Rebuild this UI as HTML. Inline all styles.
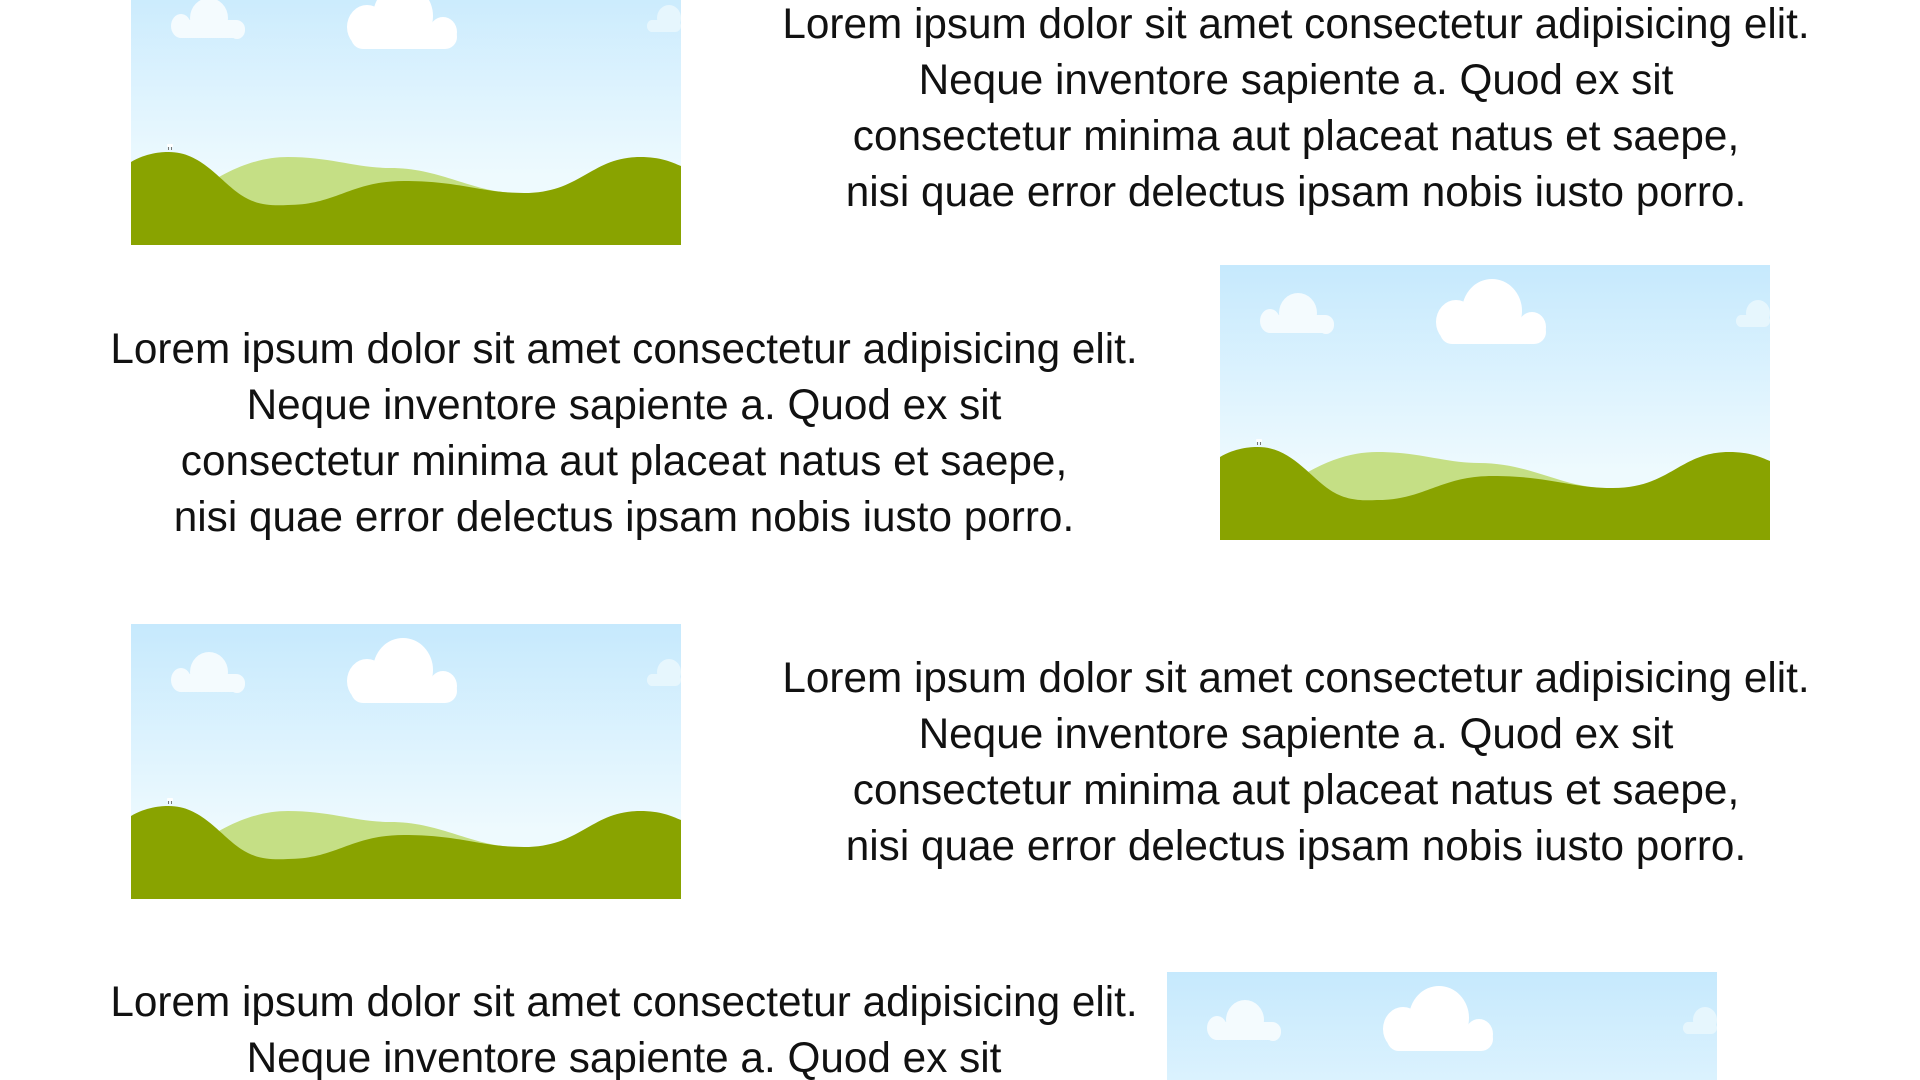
<!DOCTYPE html>
<html><head><meta charset="utf-8"><style>
html,body{margin:0;padding:0;width:1920px;height:1080px;overflow:hidden;background:#fff}
#w{position:relative;width:1920px;height:1080px;overflow:hidden}
.t{position:absolute;width:1100px;text-align:center;font-family:"Liberation Sans",sans-serif;font-size:42.3px;line-height:56px;color:#111;white-space:nowrap}
svg.i{position:absolute;width:550px;height:275px}
</style></head><body>
<svg width="0" height="0" style="position:absolute">
<defs>
<linearGradient id="sky" x1="0" y1="0" x2="0" y2="1"><stop offset="0" stop-color="#c6e9fd"/><stop offset="0.75" stop-color="#eefafe"/></linearGradient>
<g id="land">
<rect width="550" height="275" fill="url(#sky)"/>
<g fill="#f4fbfe"><ellipse cx="50" cy="56" rx="10" ry="12"/><ellipse cx="78" cy="48" rx="19" ry="20"/><ellipse cx="106" cy="60" rx="8" ry="9"/><rect x="42" y="50" width="72" height="18" rx="9"/></g>
<g fill="#fff"><ellipse cx="236" cy="57" rx="20" ry="22"/><ellipse cx="272" cy="46" rx="30" ry="32"/><ellipse cx="312" cy="62" rx="14" ry="15"/><rect x="220" y="55" width="106" height="24" rx="12"/></g>
<g fill="#e6f6fd"><ellipse cx="521" cy="56" rx="5" ry="6"/><ellipse cx="538" cy="48" rx="12" ry="13"/><rect x="516" y="50" width="34" height="12" rx="6"/></g>
<path d="M60 225 C100 196 130 187 157 187 C200 187 225 198 259 198 C310 198 340 222 385 223 L300 240 L100 240 Z" fill="#c5df85"/>
<path d="M0 192 C15 183 30 182 38 182 C70 182 88 210 110 225 C125 235 140 236 157 235 C205 235 220 211 273 211 C330 211 350 223 393 223 C450 223 460 187 509 187 C530 187 540 192 550 196 L550 275 L0 275 Z" fill="#89a300"/>
<g fill="#fff"><rect x="36" y="174" width="6" height="3" rx="1"/><rect x="37" y="177" width="1" height="3" fill="#777"/><rect x="40" y="177" width="1" height="3" fill="#777"/></g>
</g></defs></svg>
<div id="w">
<svg class="i" style="left:131px;top:-30px" viewBox="0 0 550 275"><use href="#land"/></svg>
<div class="t" style="left:746px;top:-4px">Lorem ipsum dolor sit amet consectetur adipisicing elit.<br>Neque inventore sapiente a. Quod ex sit<br>consectetur minima aut placeat natus et saepe,<br>nisi quae error delectus ipsam nobis iusto porro.</div>

<div class="t" style="left:74px;top:321px">Lorem ipsum dolor sit amet consectetur adipisicing elit.<br>Neque inventore sapiente a. Quod ex sit<br>consectetur minima aut placeat natus et saepe,<br>nisi quae error delectus ipsam nobis iusto porro.</div>
<svg class="i" style="left:1220px;top:265px" viewBox="0 0 550 275"><use href="#land"/></svg>

<svg class="i" style="left:131px;top:624px" viewBox="0 0 550 275"><use href="#land"/></svg>
<div class="t" style="left:746px;top:650px">Lorem ipsum dolor sit amet consectetur adipisicing elit.<br>Neque inventore sapiente a. Quod ex sit<br>consectetur minima aut placeat natus et saepe,<br>nisi quae error delectus ipsam nobis iusto porro.</div>

<div class="t" style="left:74px;top:974px">Lorem ipsum dolor sit amet consectetur adipisicing elit.<br>Neque inventore sapiente a. Quod ex sit<br>consectetur minima aut placeat natus et saepe,<br>nisi quae error delectus ipsam nobis iusto porro.</div>
<svg class="i" style="left:1167px;top:972px" viewBox="0 0 550 275"><use href="#land"/></svg>
</div>
</body></html>
